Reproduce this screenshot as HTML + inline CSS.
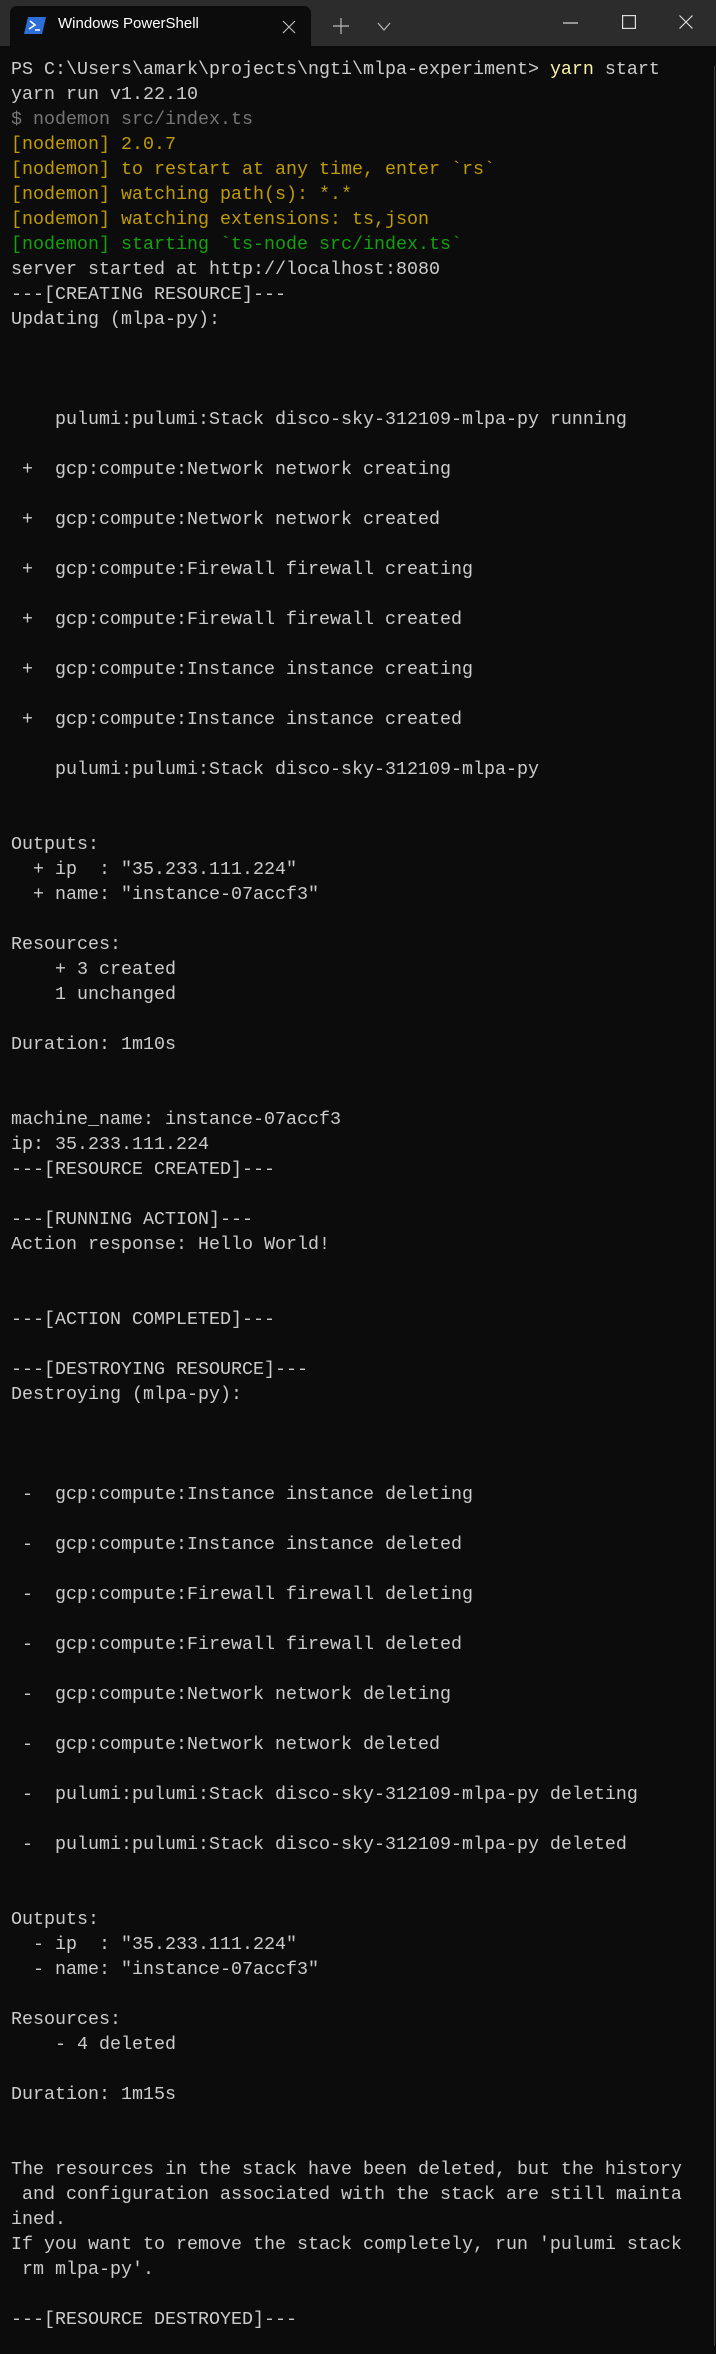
<!DOCTYPE html>
<html><head><meta charset="utf-8"><style>
html,body{margin:0;padding:0;background:#0c0c0c;}
body{width:716px;height:2354px;position:relative;overflow:hidden;}
.bar{position:absolute;left:0;top:0;width:716px;height:46px;background:#2c2c2c;}
.tab{position:absolute;left:10px;top:6px;width:301px;height:40px;background:#0c0c0c;border-radius:7px 7px 0 0;}
.ttl{position:absolute;left:58px;top:15px;font:15px "Liberation Sans",sans-serif;color:#fff;}
.term{position:absolute;left:11px;top:57px;margin:0;font:18.33px/25px "Liberation Mono",monospace;color:#cccccc;white-space:pre;}
.g{color:#767676}.y{color:#c19c00}.gr{color:#13a10e}.ly{color:#f9f1a5}
.sb{position:absolute;right:1px;top:66px;width:1px;height:2280px;background:#3a3a3a;}
</style></head><body>
<div class="bar"></div>
<div class="tab"></div>
<svg style="position:absolute;left:24px;top:17px" width="22" height="17" viewBox="0 0 22 17"><path d="M4 0H22L18 17H0Z" fill="#2d6fd6"/><path d="M6 4l5 4-6 4" stroke="#fff" stroke-width="1.6" fill="none"/><path d="M11 13h5" stroke="#fff" stroke-width="1.5"/></svg>
<div class="ttl">Windows PowerShell</div>
<svg style="position:absolute;left:282px;top:20px" width="14" height="14"><path d="M1 1L13 13M13 1L1 13" stroke="#bbb" stroke-width="1.2"/></svg>
<svg style="position:absolute;left:333px;top:18px" width="16" height="16"><path d="M8 0V16M0 8H16" stroke="#bbb" stroke-width="1.2"/></svg>
<svg style="position:absolute;left:377px;top:22px" width="14" height="9"><path d="M1 1L7 8L13 1" stroke="#bbb" stroke-width="1.2" fill="none"/></svg>
<svg style="position:absolute;left:563px;top:22px" width="15" height="2"><path d="M0 1H15" stroke="#ddd" stroke-width="1.2"/></svg>
<svg style="position:absolute;left:622px;top:15px" width="14" height="14"><rect x="0.6" y="0.6" width="12.8" height="12.8" stroke="#ddd" stroke-width="1.2" fill="none"/></svg>
<svg style="position:absolute;left:679px;top:15px" width="14" height="14"><path d="M0.5 0.5L13.5 13.5M13.5 0.5L0.5 13.5" stroke="#ddd" stroke-width="1.2"/></svg>
<div class="sb"></div>
<pre class="term">PS C:\Users\amark\projects\ngti\mlpa-experiment&gt; <span class="ly">yarn</span> start
yarn run v1.22.10
<span class="g">$ nodemon src/index.ts</span>
<span class="y">[nodemon] 2.0.7</span>
<span class="y">[nodemon] to restart at any time, enter `rs`</span>
<span class="y">[nodemon] watching path(s): *.*</span>
<span class="y">[nodemon] watching extensions: ts,json</span>
<span class="gr">[nodemon] starting `ts-node src/index.ts`</span>
server started at http://localhost:8080
---[CREATING RESOURCE]---
Updating (mlpa-py):



    pulumi:pulumi:Stack disco-sky-312109-mlpa-py running

 +  gcp:compute:Network network creating

 +  gcp:compute:Network network created

 +  gcp:compute:Firewall firewall creating

 +  gcp:compute:Firewall firewall created

 +  gcp:compute:Instance instance creating

 +  gcp:compute:Instance instance created

    pulumi:pulumi:Stack disco-sky-312109-mlpa-py


Outputs:
  + ip  : "35.233.111.224"
  + name: "instance-07accf3"

Resources:
    + 3 created
    1 unchanged

Duration: 1m10s


machine_name: instance-07accf3
ip: 35.233.111.224
---[RESOURCE CREATED]---

---[RUNNING ACTION]---
Action response: Hello World!


---[ACTION COMPLETED]---

---[DESTROYING RESOURCE]---
Destroying (mlpa-py):



 -  gcp:compute:Instance instance deleting

 -  gcp:compute:Instance instance deleted

 -  gcp:compute:Firewall firewall deleting

 -  gcp:compute:Firewall firewall deleted

 -  gcp:compute:Network network deleting

 -  gcp:compute:Network network deleted

 -  pulumi:pulumi:Stack disco-sky-312109-mlpa-py deleting

 -  pulumi:pulumi:Stack disco-sky-312109-mlpa-py deleted


Outputs:
  - ip  : "35.233.111.224"
  - name: "instance-07accf3"

Resources:
    - 4 deleted

Duration: 1m15s


The resources in the stack have been deleted, but the history
 and configuration associated with the stack are still mainta
ined.
If you want to remove the stack completely, run 'pulumi stack
 rm mlpa-py'.

---[RESOURCE DESTROYED]---</pre>
</body></html>
